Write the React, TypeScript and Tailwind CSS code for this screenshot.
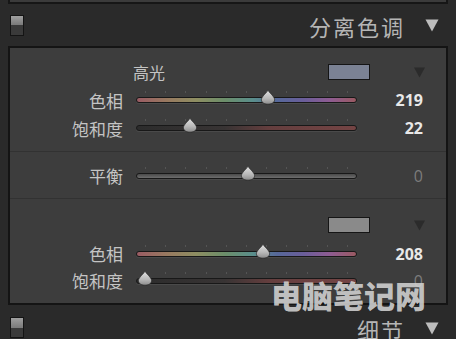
const cjk = { fontFamily: '"Noto Sans CJK SC", "Noto Sans", sans-serif' };

const HUE =
  "linear-gradient(to right, #9a5c64 0%, #987a60 14%, #8e8e62 27%, #6c8e6a 40%, #5a8e8c 53%, #56689a 64%, #6a5e9a 76%, #8e5c92 88%, #9a5a62 100%)";
const SAT =
  "linear-gradient(to right, #2c2c2c 0%, #383434 40%, #643e3e 60%, #744444 100%)";
const BAL = "linear-gradient(to bottom, #4a4a4a 0%, #5e5e5e 60%, #6e6e6e 100%)";

const Toggle = () => (
  <div className="w-[14px] h-[21px] border border-[#141414] flex flex-col">
    <div className="flex-1 bg-gradient-to-b from-[#a0a0a0] to-[#7a7a7a]" />
    <div className="flex-1 bg-[#3a3a3a]" />
  </div>
);

const Tri = ({ c = "#bdbdbd", w = 14, h = 13 }: { c?: string; w?: number; h?: number }) => (
  <svg width={w} height={h} viewBox="0 0 14 13">
    <path d="M0.5 0.5 L13.5 0.5 L7 12.5 Z" fill={c} />
  </svg>
);

const Thumb = () => (
  <svg width="16" height="16" viewBox="0 0 16 16">
    <defs>
      <linearGradient id="tg" x1="0" y1="0" x2="0" y2="1">
        <stop offset="0" stopColor="#e4e4e4" />
        <stop offset="0.6" stopColor="#b8b8b8" />
        <stop offset="1" stopColor="#8c8c8c" />
      </linearGradient>
    </defs>
    <path
      d="M8 0.8 C8.8 3.6 14.6 7.4 14.6 10.6 C14.6 13.6 11.6 15.2 8 15.2 C4.4 15.2 1.4 13.6 1.4 10.6 C1.4 7.4 7.2 3.6 8 0.8 Z"
      fill="url(#tg)"
      stroke="#2a2a2a"
      strokeWidth="0.8"
    />
  </svg>
);

const Slider = ({ label, value, pos, bg, dim }: { label: string; value: string; pos: number; bg: string; dim?: boolean }) => (
  <div className="flex items-center h-full">
    <div className="w-[113px] text-right text-[17px] leading-none text-[#c4c4c4]" style={cjk}>
      {label}
    </div>
    <div className="relative ml-[13px] w-[221px] h-[16px] flex items-center">
      <div className="absolute left-0 right-0 top-[-1px] flex justify-between px-[9px]">
        {Array.from({ length: 11 }).map((_, i) => (
          <div key={i} className="w-px h-[2px] bg-[#545454]" />
        ))}
      </div>
      <div
        className="w-full h-[6px] rounded-full border border-[#181818] shadow-[0_1px_0_#4a4a4a]"
        style={{ background: bg }}
      />
      <div className="absolute top-[-3px]" style={{ left: pos - 136 - 8 }}>
        <Thumb />
      </div>
    </div>
    <div
      className={`w-[66px] text-right text-[16px] leading-none ${dim ? "text-[#7c7c7c]" : "text-[#e8e8e8] font-bold"}`}
      style={{ fontFamily: '"Open Sans", "Liberation Sans", sans-serif' }}
    >
      {value}
    </div>
  </div>
);

const SwatchRow = ({ label, color }: { label?: string; color: string }) => (
  <div className="flex items-center h-[20px]">
    <div className="w-[123px]" />
    <div className="w-[140px] text-[16px] leading-none text-[#c4c4c4]" style={cjk}>
      {label}
    </div>
    <div className="w-[55px]" />
    <div className="w-[42px] h-[16px] border border-[#151515]" style={{ background: color }} />
    <div className="ml-[43px]">
      <Tri c="#2b2b2b" w={13} h={11} />
    </div>
  </div>
);

export default function App() {
  return (
    <div className="w-[456px] h-[339px] overflow-hidden bg-[#2a2a2a] flex flex-col">
      <div className="mx-[8px] h-[4px] bg-[#3b3b3b] border-x-2 border-b-2 border-[#161616]" />
      <div className="h-[42px] flex items-center pl-[10px] pr-[17px]">
        <Toggle />
        <div className="ml-auto mt-[1px] text-[22px] leading-none tracking-[2px] text-[#b5b5b5]" style={cjk}>
          分离色调
        </div>
        <div className="ml-[20px] mt-[1px]">
          <Tri />
        </div>
      </div>
      <div className="mx-[8px] h-[259px] bg-[#3d3d3d] border-2 border-[#141414] flex flex-col">
        <div className="pt-[14px] pb-[9px] flex flex-col">
          <SwatchRow label="高光" color="#7b8294" />
          <div className="h-[4px]" />
          <div className="h-[28px]">
            <Slider label="色相" value="219" pos={268} bg={HUE} />
          </div>
          <div className="h-[28px]">
            <Slider label="饱和度" value="22" pos={190} bg={SAT} />
          </div>
        </div>
        <div className="h-px bg-[#323232]" />
        <div className="pt-[9px] pb-[8px]">
          <div className="h-[29px]">
            <Slider label="平衡" value="0" pos={248} bg={BAL} dim />
          </div>
        </div>
        <div className="h-px bg-[#323232]" />
        <div className="pt-[16px] flex flex-col">
          <SwatchRow color="#8a8a8a" />
          <div className="h-[5px]" />
          <div className="h-[27px]">
            <Slider label="色相" value="208" pos={263} bg={HUE} />
          </div>
          <div className="relative h-[27px]">
            <Slider label="饱和度" value="0" pos={145} bg={SAT} dim />
            <div
              className="absolute left-[261px] top-[12px] text-[31px] font-black leading-none text-[#d2d2d2]/90"
              style={cjk}
            >
              电脑笔记网
            </div>
          </div>
        </div>
      </div>
      <div className="h-[34px] flex items-start pl-[10px] pr-[17px] pt-[12px]">
        <Toggle />
        <div className="ml-auto mt-[1px] text-[22px] leading-none tracking-[2px] text-[#b5b5b5]" style={cjk}>
          细节
        </div>
        <div className="ml-[20px] mt-[5px]">
          <Tri />
        </div>
      </div>
    </div>
  );
}
